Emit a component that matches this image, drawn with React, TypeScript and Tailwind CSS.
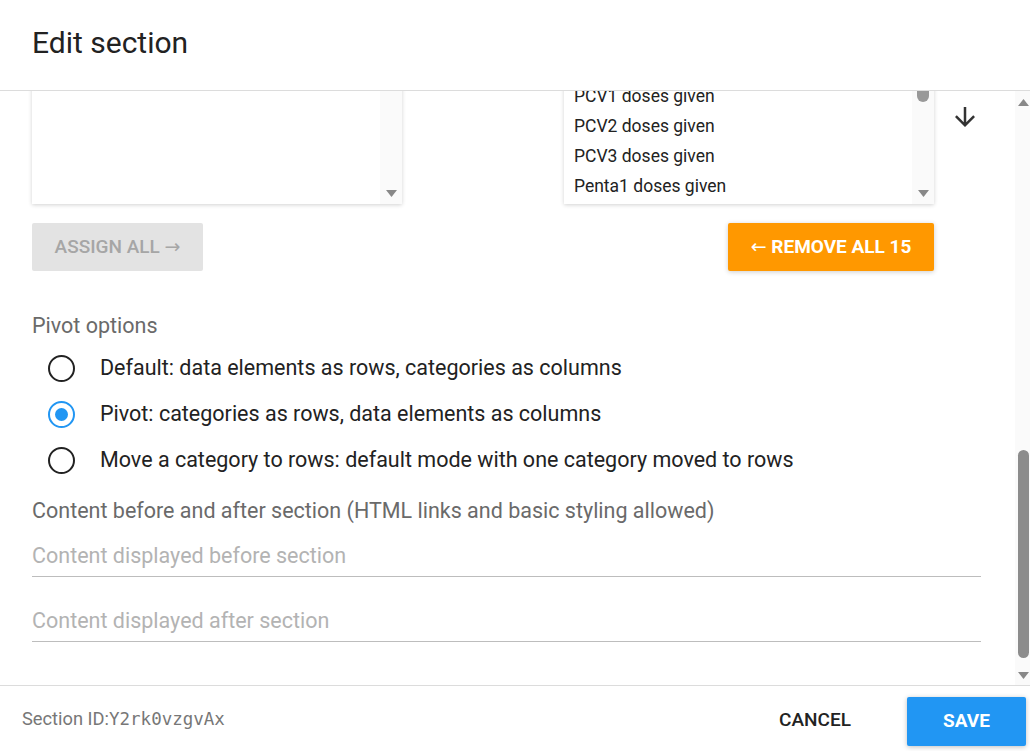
import { useLayoutEffect, useRef } from "react";

const ASSIGNED = [
  "BCG doses given",
  "Measles doses given",
  "OPV1 doses given",
  "OPV3 doses given",
  "PCV1 doses given",
  "PCV2 doses given",
  "PCV3 doses given",
  "Penta1 doses given",
  "Penta2 doses given",
  "Penta3 doses given",
  "Rota1 doses given",
  "Rota2 doses given",
  "Vitamin A given",
  "Yellow fever doses given",
  "OPV2 doses given",
];

const PIVOT_OPTIONS = [
  { label: "Default: data elements as rows, categories as columns", checked: false },
  { label: "Pivot: categories as rows, data elements as columns", checked: true },
  { label: "Move a category to rows: default mode with one category moved to rows", checked: false },
];

function ArrowIcon({ up }: { up?: boolean }) {
  return (
    <svg viewBox="0 0 24 24" className={up ? "h-[30px] w-[30px] rotate-180" : "h-[30px] w-[30px]"} fill="#333">
      <path d="M20 12l-1.41-1.41L13 16.17V4h-2v12.17l-5.58-5.59L4 12l8 8 8-8z" />
    </svg>
  );
}

function Tri({ up }: { up?: boolean }) {
  return (
    <svg width="11" height="7" viewBox="0 0 11 7" fill="#888">
      <path d={up ? "M0 7h11L5.5 0z" : "M0 0h11L5.5 7z"} />
    </svg>
  );
}

// drawn scrollbar, since the page is captured without native ones
function ListScrollbar({ thumb }: { thumb?: number }) {
  return (
    <div className="flex w-[22px] shrink-0 flex-col items-center bg-[#fafafa]">
      <div className="flex h-[15px] items-center">
        <Tri up />
      </div>
      {thumb ? <div className="w-[12px] rounded-full bg-[#999]" style={{ height: thumb }} /> : null}
      <div className="flex-1" />
      <div className="flex h-[22px] items-center">
        <Tri />
      </div>
    </div>
  );
}

function Radio({ checked }: { checked: boolean }) {
  if (checked) {
    return (
      <span className="grid h-[27px] w-[27px] shrink-0 place-items-center rounded-full border-[2.5px] border-[#2196f3]">
        <span className="h-[13px] w-[13px] rounded-full bg-[#2196f3]" />
      </span>
    );
  }
  return <span className="h-[27px] w-[27px] shrink-0 rounded-full border-[2.5px] border-[#222]" />;
}

function TextField({ placeholder }: { placeholder: string }) {
  return (
    <div className="border-b border-[#bdbdbd] pb-[8px]">
      <div className="text-[21.5px] leading-[24px] text-[#b3b3b3]">{placeholder}</div>
    </div>
  );
}

export default function App() {
  const bodyRef = useRef<HTMLDivElement>(null);

  useLayoutEffect(() => {
    const el = bodyRef.current;
    if (el) el.scrollTop = el.scrollHeight;
  }, []);

  return (
    <div className="flex h-[751px] w-[1030px] flex-col bg-white font-['Roboto',sans-serif] text-[#222]">
      <div className="flex h-[91px] shrink-0 items-center border-b border-[#dcdcdc] px-[32px] pb-[4px]">
        <h1 className="text-[30px] font-normal leading-[36px] text-[#222]">Edit section</h1>
      </div>

      <div className="flex min-h-0 flex-1">
        <div ref={bodyRef} className="flex-1 overflow-hidden pl-[32px] pr-[34px]">
          {/* fields above the fold */}
          <div className="flex h-[879px] flex-col gap-[28px] pt-[24px]">
            <TextField placeholder="Name" />
            <TextField placeholder="Code" />
            <TextField placeholder="Description" />
            <div className="text-[21.5px] text-[#666]">Available data elements</div>
            <TextField placeholder="Filter" />
          </div>

          <div className="flex">
            <div className="flex h-[251px] w-[370px] justify-end bg-white shadow-[0_1px_4px_rgba(0,0,0,0.18)]">
              <ListScrollbar />
            </div>
            <div className="ml-[162px] flex h-[251px] w-[370px] bg-white shadow-[0_1px_4px_rgba(0,0,0,0.18)]">
              <div className="flex-1 overflow-hidden pt-[8px]">
                {ASSIGNED.map((item) => (
                  <div key={item} className="h-[30px] pl-[10px] text-[17.5px] leading-[30px] text-[#222]">
                    {item}
                  </div>
                ))}
              </div>
              <ListScrollbar thumb={134} />
            </div>
            <div className="ml-[16px] flex flex-col justify-center gap-[46px]">
              <ArrowIcon up />
              <ArrowIcon />
            </div>
          </div>

          <div className="mt-[19px] flex w-[902px] justify-between">
            <button
              type="button"
              disabled
              className="h-[48px] w-[171px] rounded-[2px] bg-[#e3e3e3] text-[19px] font-medium text-[#a6a6a6]"
            >
              ASSIGN ALL <span className="font-['DejaVu_Sans'] font-normal">→</span>
            </button>
            <button
              type="button"
              className="h-[48px] w-[206px] rounded-[2px] bg-[#ff9800] text-[19px] font-bold text-white shadow-[0_1px_5px_rgba(0,0,0,0.2)]"
            >
              <span className="font-['DejaVu_Sans'] font-normal">←</span> REMOVE ALL 15
            </button>
          </div>

          <div className="mt-[43px] text-[21.5px] leading-[24px] text-[#6a6a6a]">Pivot options</div>
          <div className="mt-[7px] flex flex-col">
            {PIVOT_OPTIONS.map((opt) => (
              <label key={opt.label} className="flex h-[46px] items-center gap-[25px] pl-[16px]">
                <Radio checked={opt.checked} />
                <span className="text-[21.5px] text-[#222]">{opt.label}</span>
              </label>
            ))}
          </div>

          <div className="mt-[16px] text-[21.5px] leading-[24px] text-[#6a6a6a]">
            Content before and after section (HTML links and basic styling allowed)
          </div>
          <div className="mt-[21px]">
            <TextField placeholder="Content displayed before section" />
          </div>
          <div className="mt-[32px] pb-[43px]">
            <TextField placeholder="Content displayed after section" />
          </div>
        </div>

        <div className="flex w-[15px] shrink-0 flex-col bg-[#fafafa]">
          <div className="flex h-[22px] items-center justify-center pl-[1px]">
            <Tri up />
          </div>
          <div className="h-[337px]" />
          <div className="ml-[3px] h-[208px] w-[11px] rounded-full bg-[#8c8c8c]" />
          <div className="flex-1" />
          <div className="flex h-[20px] items-center justify-center pl-[1px]">
            <Tri />
          </div>
        </div>
      </div>

      <div className="flex h-[66px] shrink-0 items-center justify-between border-t border-[#dcdcdc] pl-[22px] pr-[4px]">
        <div className="text-[18.3px] text-[#777]">
          Section ID:<span className="font-['DejaVu_Sans_Mono',monospace] text-[17.5px]">Y2rk0vzgvAx</span>
        </div>
        <div className="flex items-center">
          <button type="button" className="mr-[37px] mt-[3px] h-[49px] w-[110px] text-[19px] font-medium text-[#222]">
            CANCEL
          </button>
          <button
            type="button"
            className="mt-[6px] h-[49px] w-[119px] rounded-[2px] bg-[#2196f3] text-[19px] font-bold text-white shadow-[0_1px_5px_rgba(0,0,0,0.25)]"
          >
            SAVE
          </button>
        </div>
      </div>
    </div>
  );
}
